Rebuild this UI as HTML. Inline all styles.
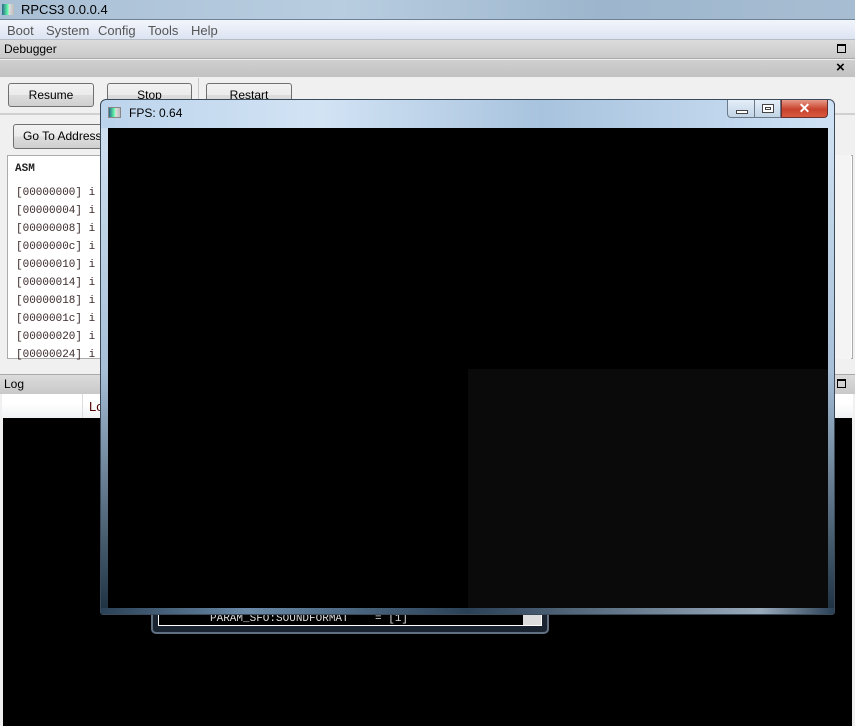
<!DOCTYPE html>
<html><head><meta charset="utf-8"><style>
*{margin:0;padding:0;box-sizing:border-box}
body{width:855px;height:726px;overflow:hidden;position:relative;background:#f0f0f0;font-family:"Liberation Sans",sans-serif;font-size:12px;color:#000}
.a{position:absolute}
.btn{position:absolute;border:1px solid #707070;border-radius:3px;background:linear-gradient(#f2f2f2,#ebebeb 50%,#dddddd 51%,#cfcfcf);text-align:center;font-size:12px;line-height:22px}
.mono{font-family:"Liberation Mono",monospace;font-size:11px;color:#222}
.m{position:absolute;top:23px;font-size:13px;color:#555}
</style></head><body>
<div class="a" style="left:0;top:0;width:855px;height:20px;background:linear-gradient(90deg,#a9bfd4,#b8cde0 40%,#9db6cd 70%,#a7bdd2);border-bottom:1px solid #6e8296"></div>
<div class="a" style="left:2px;top:4px;width:12px;height:11px;background:linear-gradient(90deg,#2a6a8a,#6fa 50%,#ddd 60%,#bbb)"></div>
<div class="a" style="left:21px;top:2px;font-size:13px">RPCS3 0.0.0.4</div>
<div class="a" style="left:0;top:20px;width:855px;height:20px;background:linear-gradient(#f2f5fb,#dce4f2);border-bottom:1px solid #b6bcc6"></div>
<div class="m" style="left:7px">Boot</div><div class="m" style="left:46px">System</div><div class="m" style="left:98px">Config</div><div class="m" style="left:148px">Tools</div><div class="m" style="left:191px">Help</div>
<div class="a" style="left:0;top:40px;width:855px;height:19px;background:linear-gradient(#dcdcdc,#c9c9c9);border-bottom:1px solid #a9a9a9"></div>
<div class="a" style="left:4px;top:42px">Debugger</div>
<div class="a" style="left:837px;top:44px;width:9px;height:9px;border:1px solid #000;border-top-width:2px"></div>
<div class="a" style="left:0;top:60px;width:855px;height:17px;background:linear-gradient(#cfcfcf,#c2c2c2)"></div>
<div class="a" style="left:836px;top:59px;font-size:15px;font-weight:bold">×</div>
<div class="btn" style="left:8px;top:83px;width:86px;height:24px">Resume</div>
<div class="btn" style="left:107px;top:83px;width:85px;height:24px">Stop</div>
<div class="a" style="left:198px;top:78px;width:1px;height:36px;background:#c8c8c8"></div>
<div class="btn" style="left:206px;top:83px;width:86px;height:24px">Restart</div>
<div class="a" style="left:0;top:113px;width:855px;height:2px;background:#d0d0d0"></div>
<div class="btn" style="left:13px;top:124px;width:100px;height:25px;font-size:12px;text-align:left;padding-left:9px">Go To Address</div>
<div class="a" style="left:7px;top:155px;width:846px;height:204px;background:#fff;border:1px solid #ababab"></div>
<div class="a mono" style="left:15px;top:163px;font-weight:bold">ASM</div>
<div class="a mono" style="left:16px;top:184px;line-height:18px;color:#3a2a2a">[00000000] i<br>[00000004] i<br>[00000008] i<br>[0000000c] i<br>[00000010] i<br>[00000014] i<br>[00000018] i<br>[0000001c] i<br>[00000020] i<br>[00000024] i</div>
<div class="a" style="left:835px;top:155px;width:16px;height:204px;background:#f4f4f4"></div>
<div class="a" style="left:0;top:374px;width:855px;height:20px;background:linear-gradient(#dcdcdc,#c9c9c9);border-top:1px solid #a9a9a9"></div>
<div class="a" style="left:4px;top:377px">Log</div>
<div class="a" style="left:837px;top:379px;width:9px;height:9px;border:1px solid #000;border-top-width:2px"></div>
<div class="a" style="left:2px;top:394px;width:851px;height:24px;background:linear-gradient(#fff,#fff 40%,#f1f2f4)"></div>
<div class="a" style="left:82px;top:394px;width:1px;height:24px;background:#ddd"></div>
<div class="a" style="left:89px;top:399px;font-size:13px;color:#500">Lo</div>
<div class="a" style="left:3px;top:418px;width:849px;height:308px;background:#000"></div>
<div class="a" style="left:151px;top:590px;width:398px;height:44px;border:2px solid #607080;border-radius:5px;background:#1a2430"></div>
<div class="a" style="left:158px;top:600px;width:384px;height:26px;background:#000;border:1px solid #fff;border-top:none"></div>
<div class="a" style="left:523px;top:612px;width:18px;height:13px;background:#ddd"></div>
<div class="a mono" style="left:210px;top:613px;color:#ddd;font-size:11px;height:12px;overflow:hidden">PARAM_SFO:SOUNDFORMAT &nbsp;&nbsp;&nbsp;= [1]</div>
<div class="a" style="left:100px;top:99px;width:735px;height:516px;border:1px solid #3a4a5a;border-radius:6px 6px 3px 3px;background:linear-gradient(90deg,#bcd4ec,#d2e3f4 30%,#a8c3de 60%,#cfe2f5);"></div>
<div class="a" style="left:101px;top:128px;width:7px;height:486px;background:linear-gradient(#cfe0f0,#a7c0d8 50%,#1c3040)"></div>
<div class="a" style="left:828px;top:128px;width:6px;height:486px;background:linear-gradient(#cfe0f0,#a7c0d8 50%,#1c3040)"></div>
<div class="a" style="left:101px;top:608px;width:733px;height:6px;background:linear-gradient(90deg,#2a4055,#6a8aa8 20%,#2a4055 50%,#9ab 90%,#2a4055)"></div>
<div class="a" style="left:108px;top:107px;width:13px;height:11px;background:linear-gradient(90deg,#2a6a8a,#6fa 50%,#ddd 60%,#bbb);border:1px solid #888"></div>
<div class="a" style="left:129px;top:106px;font-size:12px">FPS: 0.64</div>
<div class="a" style="left:727px;top:100px;width:54px;height:18px;border:1px solid #6a7a8a;border-top:none;border-radius:0 0 0 4px;background:linear-gradient(#e4eef8,#c2d4e6)"></div>
<div class="a" style="left:754px;top:100px;width:1px;height:18px;background:#6a7a8a"></div>
<div class="a" style="left:736px;top:110px;width:12px;height:4px;border:1px solid #444;background:#fff"></div>
<div class="a" style="left:762px;top:104px;width:12px;height:9px;border:1px solid #444;background:#fff"><div style="margin:2px;height:3px;border:1px solid #444"></div></div>
<div class="a" style="left:781px;top:100px;width:47px;height:18px;border:1px solid #6a3030;border-top:none;border-radius:0 0 4px 0;background:linear-gradient(#e89a88,#c8422c 55%,#d85a40);color:#fff;font-weight:bold;text-align:center;font-size:14px;line-height:16px">✕</div>
<div class="a" style="left:108px;top:128px;width:720px;height:480px;background:#000"></div>
<div class="a" style="left:468px;top:369px;width:360px;height:239px;background:#0a0a0a"></div>
</body></html>
